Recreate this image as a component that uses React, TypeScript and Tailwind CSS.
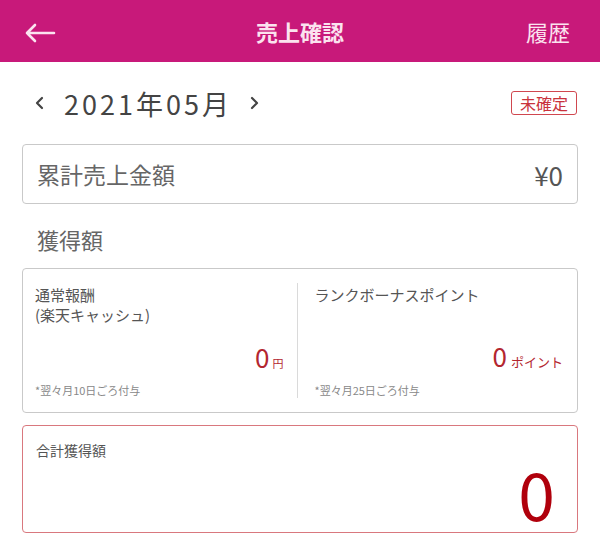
import React from 'react';

const BackArrow: React.FC<{className?: string}> = ({ className }) => (
    <svg className={className} viewBox="0 0 32 20" fill="none" stroke="currentColor" strokeWidth={2.6} strokeLinecap="round" strokeLinejoin="round">
        <path d="M30 10H3M11 2L3 10l8 8" />
    </svg>
);

const Chevron: React.FC<{className?: string; dir: 'left' | 'right'}> = ({ className, dir }) => (
    <svg className={className} viewBox="0 0 10 14" fill="none" stroke="currentColor" strokeWidth={2.2} strokeLinecap="round" strokeLinejoin="round">
        {dir === 'left' ? <path d="M8 2L3 7l5 5" /> : <path d="M2 2l5 5-5 5" />}
    </svg>
);

const EarnCell: React.FC<{label: React.ReactNode; unit: string; unitClass: string; note: string; className?: string}> = ({ label, unit, unitClass, note, className }) => (
    <div className={`flex-1 flex flex-col pt-[16px] pb-[14px] ${className ?? ''}`}>
        <p className="text-[15px] leading-[20px] text-[#555]">{label}</p>
        <div className="mt-auto flex items-baseline justify-end text-[#b3262f]">
            <span className="text-[26px] leading-none">0</span>
            <span className={unitClass}>{unit}</span>
        </div>
        <p className="mt-[10px] text-[11px] text-[#888]">{note}</p>
    </div>
);

const App: React.FC = () => {
    return (
        <div className="w-[600px] h-[545px] bg-white overflow-hidden font-['Noto_Sans_CJK_JP','Noto_Sans',sans-serif] text-[#555]">
            {/* header */}
            <header className="h-[62px] bg-[#c8197a] grid grid-cols-[1fr_auto_1fr] items-center px-[24px] text-[#fbe3ef]">
                <div className="flex items-center">
                    <BackArrow className="w-[32px] h-[20px] mt-[4px]" />
                </div>
                <h1 className="text-[22px] font-bold leading-none">売上確認</h1>
                <div className="flex justify-end">
                    <span className="text-[22px] leading-none mr-[6px]">履歴</span>
                </div>
            </header>

            {/* month selector */}
            <div className="h-[82px] flex items-center justify-between pl-[34px] pr-[23px]">
                <div className="flex items-center text-[#444]">
                    <Chevron dir="left" className="w-[10px] h-[14px]" />
                    <span className="ml-[20px] text-[27px] tracking-[3px] leading-none">2021年05月</span>
                    <Chevron dir="right" className="w-[10px] h-[14px] ml-[18px]" />
                </div>
                <span className="border border-[#d0474f] text-[#c9333c] rounded-[3px] text-[16px] leading-none px-[8px] py-[3px]">未確定</span>
            </div>

            {/* total sales */}
            <div className="mx-[22px] h-[60px] border border-[#c9c9c9] rounded-[4px] flex items-center justify-between px-[14px]">
                <span className="text-[23px] text-[#666]">累計売上金額</span>
                <span className="text-[26px] text-[#555]">¥0</span>
            </div>

            {/* earned */}
            <div className="h-[64px] flex items-center pl-[37px] pt-[6px]">
                <h2 className="text-[22px] text-[#666]">獲得額</h2>
            </div>

            <div className="mx-[22px] h-[145px] border border-[#c9c9c9] rounded-[4px] flex">
                <EarnCell
                    className="pl-[12px] pr-[13px]"
                    label={<>通常報酬<br />(楽天キャッシュ)</>}
                    unit="円"
                    unitClass="text-[11px] ml-[3px]"
                    note="*翌々月10日ごろ付与"
                />
                <div className="w-px bg-[#dadada] my-[14px]" />
                <EarnCell
                    className="pl-[17px] pr-[14px]"
                    label="ランクボーナスポイント"
                    unit="ポイント"
                    unitClass="text-[13px] ml-[4px]"
                    note="*翌々月25日ごろ付与"
                />
            </div>

            {/* total earned */}
            <div className="mx-[22px] mt-[12px] h-[108px] border border-[#d9787e] rounded-[4px] flex flex-col pl-[13px] pr-[22px] pt-[14px]">
                <span className="text-[14px] text-[#555]">合計獲得額</span>
                <span className="self-end text-[66px] leading-none -mt-[2px] text-[#b0000c]">0</span>
            </div>
        </div>
    );
};

export default App;
